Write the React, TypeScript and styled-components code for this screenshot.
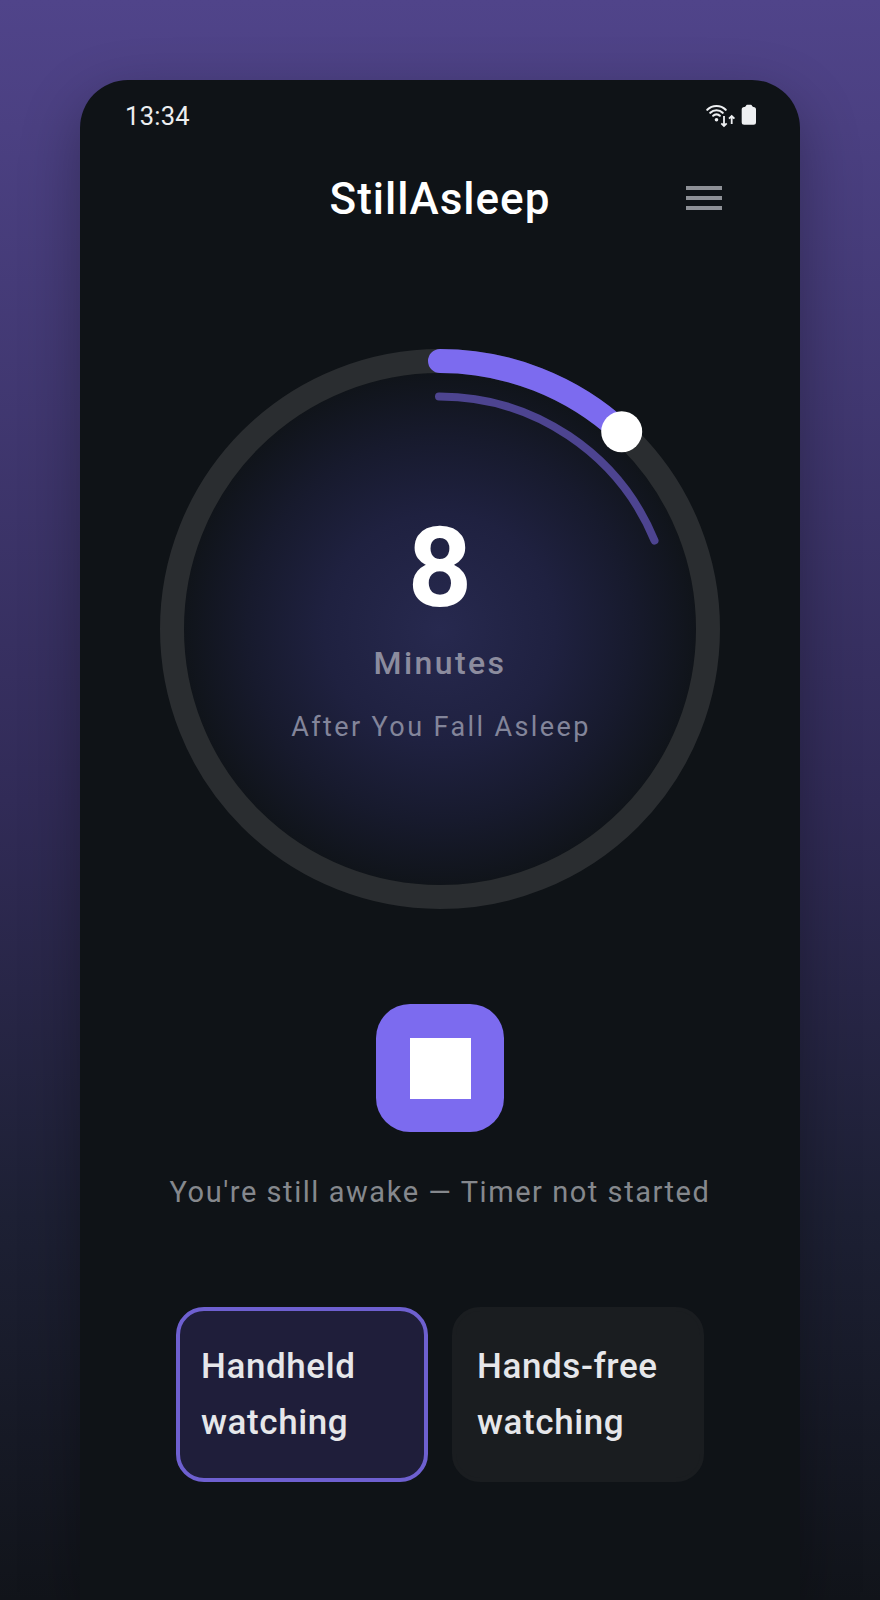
import styled, { createGlobalStyle } from "styled-components";

const GlobalStyle = createGlobalStyle`
  html,
  body {
    margin: 0;
    padding: 0;
    background: #111418;
    font-family: Roboto, "Liberation Sans", sans-serif;
  }
`;

const Page = styled("div")`
  width: 880px;
  height: 1600px;
  padding: 80px 80px 0;
  box-sizing: border-box;
  overflow: hidden;
  background: linear-gradient(180deg, #50448a 0%, #312b57 50%, #1d2034 76%, #11141a 100%);
`;

const Phone = styled("main")`
  display: flex;
  flex-direction: column;
  align-items: center;
  height: 1520px;
  padding-top: 20px;
  box-sizing: border-box;
  border-radius: 48px 48px 0 0;
  background: #0f1317;
  box-shadow: 0 20px 60px rgba(0, 0, 0, 0.3);
`;

const StatusBar = styled("div")`
  display: flex;
  align-items: center;
  justify-content: space-between;
  align-self: stretch;
  height: 32px;
  padding: 0 44px 0 45px;
`;

const Clock = styled("span")`
  font-size: 25.5px;
  font-weight: 400;
  line-height: 32px;
  letter-spacing: 0.3px;
  color: #eceef0;
`;

const Header = styled("header")`
  display: grid;
  grid-template-columns: 1fr auto 1fr;
  align-items: center;
  align-self: stretch;
  height: 60px;
  margin-top: 36px;
  padding: 0 78px;
`;

const Title = styled("h1")`
  grid-column: 2;
  margin: 1px 0 -1px;
  font-size: 44px;
  font-weight: 500;
  line-height: 60px;
  letter-spacing: 1px;
  color: #ffffff;
`;

const MenuButton = styled("button")`
  display: flex;
  flex-direction: column;
  gap: 6px;
  justify-self: end;
  width: 36px;
  padding: 0;
  border: 0;
  background: none;
`;

const MenuBar = styled("span")`
  height: 4px;
  background: #8e9197;
`;

const Dial = styled("section")`
  position: relative;
  display: flex;
  flex-direction: column;
  align-items: center;
  justify-content: center;
  width: 560px;
  height: 560px;
  margin-top: 121px;
  box-sizing: border-box;
  border: 24px solid #2a2d30;
  border-radius: 50%;
  background: radial-gradient(circle closest-side, #27294f 0%, #1f2140 45%, #171a2d 75%, #10141a 100%);
  background-clip: padding-box;
`;

const DialArcs = styled("svg")`
  position: absolute;
  inset: -24px;
  width: 560px;
  height: 560px;
`;

const Count = styled("div")`
  font-size: 112px;
  font-weight: 700;
  line-height: 112px;
  color: #ffffff;
`;

const Unit = styled("div")`
  margin-top: 19px;
  font-size: 32px;
  font-weight: 500;
  line-height: 40px;
  letter-spacing: 2.4px;
  color: #8c8c9e;
`;

const Caption = styled("div")`
  margin-top: 24px;
  padding-left: 2px;
  font-size: 27px;
  font-weight: 400;
  line-height: 40px;
  letter-spacing: 2.4px;
  color: #83859a;
`;

const StopButton = styled("button")`
  display: flex;
  align-items: center;
  justify-content: center;
  width: 128px;
  height: 128px;
  margin-top: 95px;
  padding: 0;
  border: 0;
  border-radius: 34px;
  background: #7c6bef;
`;

const StopGlyph = styled("span")`
  width: 61px;
  height: 61px;
  background: #ffffff;
`;

const TimerStatus = styled("p")`
  margin: 40px 0 0;
  font-size: 29px;
  font-weight: 400;
  line-height: 40px;
  letter-spacing: 1.55px;
  color: #85888d;
`;

const Modes = styled("div")`
  display: flex;
  gap: 24px;
  margin-top: 95px;
`;

const ModeCard = styled("button")<{ $active?: boolean }>`
  width: 252px;
  height: 175px;
  padding: 0 21px;
  box-sizing: border-box;
  border: 4px solid ${(p) => (p.$active ? "#6e60d0" : "#1a1d20")};
  border-radius: 28px;
  background: ${(p) => (p.$active ? "#1f1e3a" : "#1a1d20")};
  font-family: inherit;
  font-size: 35px;
  font-weight: 500;
  line-height: 56px;
  letter-spacing: 0.6px;
  text-align: left;
  color: #e6e7ea;
`;

function StatusIcons() {
  return (
    <svg width="52" height="26" viewBox="0 0 52 26" fill="none">
      <g stroke="#eef0f2" strokeWidth="2.2" strokeLinecap="round">
        <path d="M3.3 6.8A13 13 0 0 1 21.7 6.8" />
        <path d="M6.3 9.8A8.8 8.8 0 0 1 18.7 9.8" />
        <path d="M9.2 12.7A4.6 4.6 0 0 1 15.8 12.7" />
      </g>
      <circle cx="12.5" cy="16.7" r="1.8" fill="#eef0f2" />
      <g stroke="#eef0f2" strokeWidth="1.8" fill="none">
        <path d="M20 13v10M17.3 20.3l2.7 2.7 2.7-2.7" />
        <path d="M27.7 21v-8M25 15.7l2.7-2.7 2.7 2.7" />
      </g>
      <path
        d="M42 3a1.3 1.3 0 0 1 1.3-1.3h3.4A1.3 1.3 0 0 1 48 3l1.3 1h.2a2.5 2.5 0 0 1 2.5 2.5v12.7a2.5 2.5 0 0 1-2.5 2.5h-9.3a2.5 2.5 0 0 1-2.5-2.5V6.5A2.5 2.5 0 0 1 40.2 4h.5z"
        fill="#eef0f2"
      />
    </svg>
  );
}

export default function App() {
  return (
    <Page>
      <GlobalStyle />
      <Phone>
        <StatusBar>
          <Clock>13:34</Clock>
          <StatusIcons />
        </StatusBar>
        <Header>
          <Title>StillAsleep</Title>
          <MenuButton aria-label="Menu">
            <MenuBar />
            <MenuBar />
            <MenuBar />
          </MenuButton>
        </Header>
        <Dial>
          <DialArcs viewBox="0 0 560 560" fill="none">
            <path
              d="M279 47.5A232.5 232.5 0 0 1 494.5 191.5"
              stroke="#4d4490"
              strokeWidth="8"
              strokeLinecap="round"
            />
            <path
              d="M280 12A268 268 0 0 1 461.7 83"
              stroke="#7c6bef"
              strokeWidth="24"
              strokeLinecap="round"
            />
            <circle cx="461.7" cy="82.7" r="20.5" fill="#ffffff" />
          </DialArcs>
          <Count>8</Count>
          <Unit>Minutes</Unit>
          <Caption>After You Fall Asleep</Caption>
        </Dial>
        <StopButton aria-label="Stop">
          <StopGlyph />
        </StopButton>
        <TimerStatus>You're still awake — Timer not started</TimerStatus>
        <Modes>
          <ModeCard $active>
            Handheld
            <br />
            watching
          </ModeCard>
          <ModeCard>
            Hands-free
            <br />
            watching
          </ModeCard>
        </Modes>
      </Phone>
    </Page>
  );
}
